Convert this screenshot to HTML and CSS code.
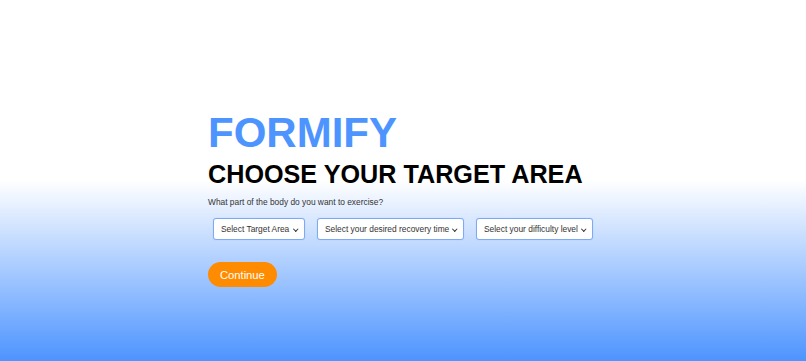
FILE: index.html
```html
<!DOCTYPE html>
<html lang="en">
<head>
    <meta charset="UTF-8">
    <title>Formify</title>
    <link rel="stylesheet" href="styles.css">
</head>
<body>
<div class="page">
    <div class="intro">
        <h1 class="brand">FORMIFY</h1>
        <h2 class="title">CHOOSE YOUR TARGET AREA</h2>
        <p class="hint">What part of the body do you want to exercise?</p>
        <div class="choices">
            <span class="choice-wrap">
                <select class="choice choice-area">
                    <option>Select Target Area</option>
                    <option>Upper Body</option>
                    <option>Lower Body</option>
                    <option>Core</option>
                </select>
            </span>
            <span class="choice-wrap">
                <select class="choice choice-time">
                    <option>Select your desired recovery time</option>
                    <option>1 week</option>
                    <option>2 weeks</option>
                    <option>1 month</option>
                </select>
            </span>
            <span class="choice-wrap">
                <select class="choice choice-level">
                    <option>Select your difficulty level</option>
                    <option>Beginner</option>
                    <option>Intermediate</option>
                    <option>Advanced</option>
                </select>
            </span>
        </div>
        <button class="continue">Continue</button>
    </div>
</div>
</body>
</html>
```

FILE: styles.css
```css
html {
    box-sizing: border-box;
    font-family: 'Liberation Sans', Arial, sans-serif;
}

*,
*:before,
*:after {
    box-sizing: inherit;
}

body {
    margin: 0;
}

.page {
    min-height: 100vh;
    background: linear-gradient(to bottom, #ffffff 50%, #4d94ff 100%);
    padding-top: 112px;
}

.intro {
    width: 390px;
    margin: 0 auto;
    display: flex;
    flex-direction: column;
    align-items: flex-start;
}

.brand {
    margin: 0;
    font-size: 42px;
    line-height: 42px;
    font-weight: bold;
    color: #4d94ff;
}

.title {
    margin: 8px 0 0;
    font-size: 25.2px;
    line-height: 25px;
    font-weight: bold;
    color: #000;
}

.hint {
    margin: 11px 0 0;
    font-size: 8.4px;
    line-height: 9px;
    color: #333;
}

.choices {
    display: flex;
    gap: 12px;
    margin: 11px 0 0 5px;
}

.choice-wrap {
    position: relative;
    display: block;
}

/* small chevron like the native one */
.choice-wrap:after {
    content: "";
    position: absolute;
    right: 8px;
    top: 9px;
    width: 3.5px;
    height: 3.5px;
    border-right: 1.3px solid #333;
    border-bottom: 1.3px solid #333;
    transform: rotate(45deg);
    pointer-events: none;
}

.choice {
    display: block;
    height: 22px;
    padding: 0 12px 0 7px;
    appearance: none;
    -webkit-appearance: none;
    font-family: 'Liberation Sans', Arial, sans-serif;
    font-size: 8.4px;
    color: #333;
    background: #fff;
    border: 1px solid #7ea9f3;
    border-radius: 3px;
    box-shadow: 0 0 1px rgba(77, 148, 255, 0.4);
}

.choice-area { width: 92px; }
.choice-time { width: 147px; }
.choice-level { width: 117px; }

.continue {
    margin-top: 22px;
    height: 25px;
    padding: 0 12px;
    border: none;
    border-radius: 13px;
    background: #ff8c00;
    color: #fff;
    font-family: 'Liberation Sans', Arial, sans-serif;
    font-size: 11.2px;
}
```
